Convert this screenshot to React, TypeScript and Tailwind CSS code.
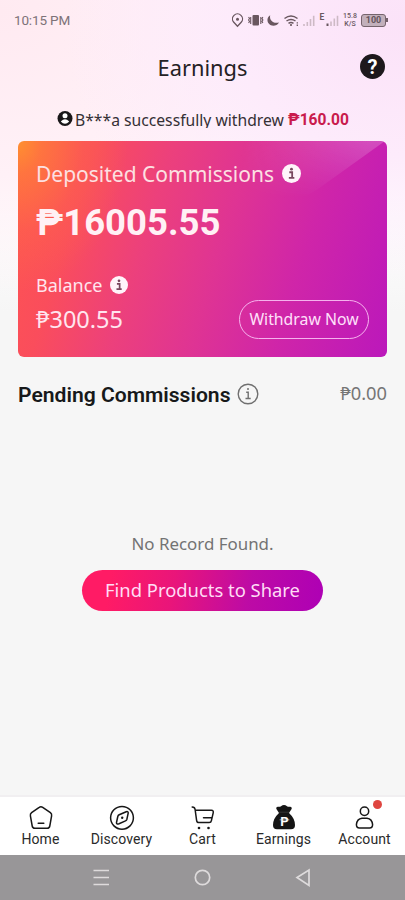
import type { ReactNode } from 'react';

const noto = "font-['Noto_Sans','Open_Sans',sans-serif]";
const roboto = "font-['Roboto','Noto_Sans',sans-serif]";

function StatusBar() {
  return (
    <header className={`${roboto} flex h-10 items-center justify-between pl-[14px] pr-[17px] text-[#7d7278]`}>
      <span className="text-[13.5px] leading-4 tracking-[-0.15px]">10:15 PM</span>
      <div className="flex h-5 items-center">
        <svg width="110" height="20" viewBox="0 0 110 20" fill="none" stroke="#69575f">
          <path d="M5.5 16.3 1.8 12.3A5 5 0 1 1 9.2 12.3Z" strokeWidth="1.3" />
          <circle cx="5.5" cy="9.2" r="1.5" fill="#69575f" stroke="none" />
          <rect x="20.5" y="5" width="6.5" height="10.5" rx="1" fill="#69575f" stroke="none" />
          <path d="M18.7 7v7M28.8 7v7M16.6 7l.9 1.5-.9 1.5.9 1.5-.9 1.5M30.9 7l-.9 1.5.9 1.5-.9 1.5.9 1.5" strokeWidth="1.1" />
          <path d="M38.2 5.2C37 10 41.5 14.3 47 12.4 44.8 16.4 39.3 16.8 36.7 13.5 34.5 10.5 35.5 6.7 38.2 5.2Z" fill="#69575f" stroke="none" />
          <path d="M52.5 8.5q6.5-4.8 13 0M54.5 11q4.5-3.2 9 0M56.5 13.4q2.5-1.8 5 0" strokeWidth="1.5" />
          <circle cx="59" cy="15" r="1.1" fill="#69575f" stroke="none" />
          <path d="M65.3 12.2v1.4M65.3 14.6v1.4" strokeWidth="1.3" />
          <path d="M72 14v2M75.3 12v4M78.5 9v7M81.7 5.8v10.2" stroke="#cdbac5" strokeWidth="1.6" />
          <path d="M95.5 13.5v2.5" strokeWidth="2" />
          <path d="M99 11.5V16M102.3 8.5V16M105.5 5.8V16" stroke="#cdbac5" strokeWidth="1.6" />
          <text x="87.5" y="10" fontSize="8.5" fontWeight="700" fontFamily="Roboto" fill="#69575f" stroke="none">E</text>
        </svg>
        <div className="mr-[2px] w-[16px] text-center text-[7px] font-medium leading-[8px] text-[#69575f]">
          <div>15.8</div>
          <div>K/S</div>
        </div>
        <div className="ml-px flex h-[13px] w-[25px] items-center justify-center rounded-[3px] border border-[#75636c] bg-[#c2b0bb] text-[9px] font-bold leading-none text-[#65545d]">
          100
        </div>
        <div className="h-1 w-[2px] bg-[#75636c]" />
      </div>
    </header>
  );
}

function InfoSolid({ size }: { size: number }) {
  return (
    <svg width={size} height={size} viewBox="0 0 20 20" className="shrink-0">
      <circle cx="10" cy="10" r="10" fill="#fff4fa" />
      <circle cx="10" cy="5.4" r="1.5" fill="#79475e" />
      <path d="M7.7 8.7h3v6M7.2 14.6h5.8" fill="none" stroke="#79475e" strokeWidth="1.9" />
    </svg>
  );
}

function BalanceCard() {
  return (
    <section className="relative mx-[18px] h-[216px] overflow-hidden rounded-[6px] bg-[radial-gradient(ellipse_110px_150px_at_0%_0%,#ff9030_0%,#ff8038bb_22%,#ff6e4455_60%,transparent_100%),linear-gradient(107deg,#ff5550_0%,#fa4d5c_18%,#ec407c_36%,#df3493_54%,#cf25a9_74%,#bb18bb_100%)] px-[18px]">
      <svg className="absolute right-0 top-0" width="369" height="80" viewBox="0 0 369 80">
        <defs>
          <linearGradient id="sheen" gradientUnits="userSpaceOnUse" x1="345" y1="25" x2="225" y2="0">
            <stop offset="0" stopColor="#fff" stopOpacity=".2" />
            <stop offset="1" stopColor="#fff" stopOpacity="0" />
          </linearGradient>
          <linearGradient id="sheenFade" gradientUnits="userSpaceOnUse" x1="0" y1="0" x2="0" y2="58">
            <stop offset="0" stopColor="#fff" />
            <stop offset="1" stopColor="#000" />
          </linearGradient>
          <mask id="sheenMask">
            <rect width="369" height="80" fill="url(#sheenFade)" />
          </mask>
        </defs>
        <path d="M180 0H367L300 48 250 80Z" fill="url(#sheen)" mask="url(#sheenMask)" />
      </svg>
      <div className="relative flex h-full flex-col text-[#ffe5ef]">
        <div className="mt-[18px] flex h-7 items-center">
          <span className="mt-px w-[246px] whitespace-nowrap text-[21px] leading-7 text-[#fce0e2]">Deposited Commissions</span>
          <InfoSolid size={19} />
        </div>
        <div className={`${roboto} mt-[14px] h-11 whitespace-nowrap text-[36.5px] font-bold leading-[44px] text-[#fff1f5]`}>₱16005.55</div>
        <div className="mt-[28px] flex h-6 items-center">
          <span className="w-[74px] text-[18px] leading-6">Balance</span>
          <InfoSolid size={18} />
        </div>
        <div className="mt-[2px] flex h-10 items-center justify-between">
          <span className="text-[23.5px] leading-8">₱300.55</span>
          <button className="flex h-[39px] w-[130px] items-center justify-center whitespace-nowrap rounded-full border-[1.5px] border-[#f5b2ed] pt-[2px] text-[15.8px] text-[#ffe0fa]">
            Withdraw Now
          </button>
        </div>
      </div>
    </section>
  );
}

const icons: Record<string, ReactNode> = {
  Home: (
    <path d="M12.2 2.3q1.7-1.3 3.5 0l7.7 5.4q1.6 1.2 1.2 3.1l-1.8 10.2q-.4 2.2-2.6 2.2H7.8q-2.2 0-2.6-2.2L3.4 10.8q-.4-1.9 1.2-3.1ZM11.2 18.2h5.6" />
  ),
  Discovery: (
    <>
      <circle cx="14" cy="12.8" r="11.4" />
      <path d="M18.2 6.8q2.2-.7 2 1.3l-1.3 6.1q-.3 1.2-1.4 1.7l-6.5 2.8q-2.8.9-2.5-1.2l1.3-6q.3-1.2 1.4-1.7Z" />
      <circle cx="14.2" cy="12.8" r="1.2" fill="#171717" stroke="none" />
    </>
  ),
  Cart: (
    <>
      <path d="M3.2 2q2.6.1 2.9 2.5l1.5 10.8q.3 2.3 2.3 2.3h10.2q2 0 2.3-2l1.8-7.8q.5-2.5-1.8-2.5H6.3M14.5 12.7h8.2" />
      <circle cx="10" cy="23" r="1.3" fill="#171717" stroke="none" />
      <circle cx="19.5" cy="23" r="1.3" fill="#171717" stroke="none" />
    </>
  ),
  Earnings: (
    <>
      <path d="M6.4 4q-.6-2.4 2-2.2 1.6.2 2.6-.6 3-2.2 6 0 1 .8 2.6.6 2.6-.2 2 2.2L19 8Q25 13.5 25 20q0 4.3-4 4.3H7q-4 0-4-4.3Q3 13.5 9 8Z" fill="#151515" stroke="none" />
      <path d="M9.5 7.2h9" stroke="#555" strokeWidth=".5" />
      <text x="14.5" y="21" textAnchor="middle" fill="#fff" stroke="none" fontFamily="Roboto" fontWeight="700" fontSize="13">P</text>
      <path d="M10 14.8h9" stroke="#ddd" strokeWidth=".6" />
    </>
  ),
  Account: (
    <>
      <circle cx="13.5" cy="6.2" r="4.2" />
      <path d="M11 13.2h5q5.1.6 5.6 6.4 0 3.5-3 3.5H8.4q-3 0-3-3.5.5-5.8 5.6-6.4Z" />
    </>
  ),
};

function TabBar() {
  return (
    <nav className={`${roboto} grid h-[58px] grid-cols-5 bg-white`}>
      {Object.entries(icons).map(([label, icon]) => (
        <a key={label} className="relative flex flex-col items-center pt-[8px] text-[#2a2a2a]">
          <svg width="28" height="26" viewBox="0 0 28 26" fill="none" stroke="#171717" strokeWidth="1.5" strokeLinecap="round" strokeLinejoin="round">
            {icon}
          </svg>
          <span className="text-[14px] leading-4 tracking-[0.1px]">{label}</span>
          {label === 'Account' && <span className="absolute left-[49px] top-[3px] size-[9px] rounded-full bg-[#df4540]" />}
        </a>
      ))}
    </nav>
  );
}

export default function App() {
  return (
    <main className={`${noto} flex h-[900px] w-[405px] flex-col overflow-hidden bg-[radial-gradient(ellipse_at_100%_8%,#fbe2f8_0%,#fdebfb_30%,transparent_60%),radial-gradient(ellipse_at_0%_4%,#ffeaf1_0%,#fff1f7_40%,transparent_70%),linear-gradient(#fff6fb_0%,#ffffff_20%,#ffffff_48%,#f6f6f6_78%,#f6f6f6_100%)] bg-[length:405px_330px,405px_300px,405px_400px] bg-no-repeat bg-[#f6f6f6]`}>
      <StatusBar />
      <div className="grid h-[58px] grid-cols-[1fr_auto_1fr] items-center">
        <span />
        <h1 className="mb-[3px] text-[21.8px] leading-8 text-[#242124]">Earnings</h1>
        <span className={`${roboto} mr-5 mb-[5px] flex size-[25px] items-center justify-center justify-self-end rounded-full bg-[#1d181c] text-[20px] font-bold leading-none text-white`}>?</span>
      </div>
      <div className="flex h-[30px] items-start overflow-hidden pl-[57px] pt-[10px]">
        <svg width="16" height="20" viewBox="0 0 16 20" className="shrink-0">
          <circle cx="8" cy="10.5" r="7.5" fill="#191719" />
          <circle cx="8" cy="7.8" r="2.5" fill="#fff" />
          <path d="M3.8 13.5Q8 9.2 12.2 13.5 8 18 3.8 13.5Z" fill="#fff" />
        </svg>
        <p className="ml-[2px] flex h-5 whitespace-nowrap text-[15.7px] leading-[25px] text-[#353035]">
          <span className="block w-[213px]">B***a successfully withdrew</span>
          <strong className={`${roboto} text-[15.6px] font-bold text-[#c91a4d]`}>₱160.00</strong>
        </p>
      </div>
      <div className="h-[13px] shrink-0" />
      <BalanceCard />
      <div className="flex h-[73px] items-center px-[18px]">
        <h2 className={`${roboto} mt-[2px] w-[219px] whitespace-nowrap text-[21.1px] font-semibold text-[#17191a]`}>Pending Commissions</h2>
        <svg width="22" height="22" viewBox="0 0 22 22" fill="none" stroke="#707070" strokeWidth="1.4">
          <circle cx="11" cy="11" r="9.8" />
          <path d="M9.2 9.3h2v6M8.5 15.5h5.2" />
          <circle cx="11" cy="6.1" r="1" fill="#707070" stroke="none" />
        </svg>
        <span className="mb-[2px] ml-auto text-[18.3px] text-[#757575]">₱0.00</span>
      </div>
      <section className="flex flex-1 flex-col items-center pt-[102px]">
        <p className="text-[16.9px] leading-6 text-[#737373]">No Record Found.</p>
        <button className="mt-[14px] h-[41px] w-[241px] whitespace-nowrap rounded-full bg-[linear-gradient(100deg,#ff1b65_12%,#e9157a_38%,#bd0ba5_69%,#ae00b5_100%)] pb-[2px] text-[18.4px] text-[#ffdcf5]">
          Find Products to Share
        </button>
      </section>
      <div className="h-[2px] bg-[#f1eff1]" />
      <TabBar />
      <footer className="flex h-[45px] items-center bg-[#989698]">
        <svg width="405" height="45" viewBox="0 0 405 45" fill="none" stroke="#dedbdc" strokeWidth="1.7">
          <path d="M93.5 15.5H109M93.5 22.5H109M93.5 29.5H109" />
          <circle cx="202.5" cy="22.5" r="7.2" />
          <path d="M309 15v15.5L297 22.5Z" />
        </svg>
      </footer>
    </main>
  );
}
